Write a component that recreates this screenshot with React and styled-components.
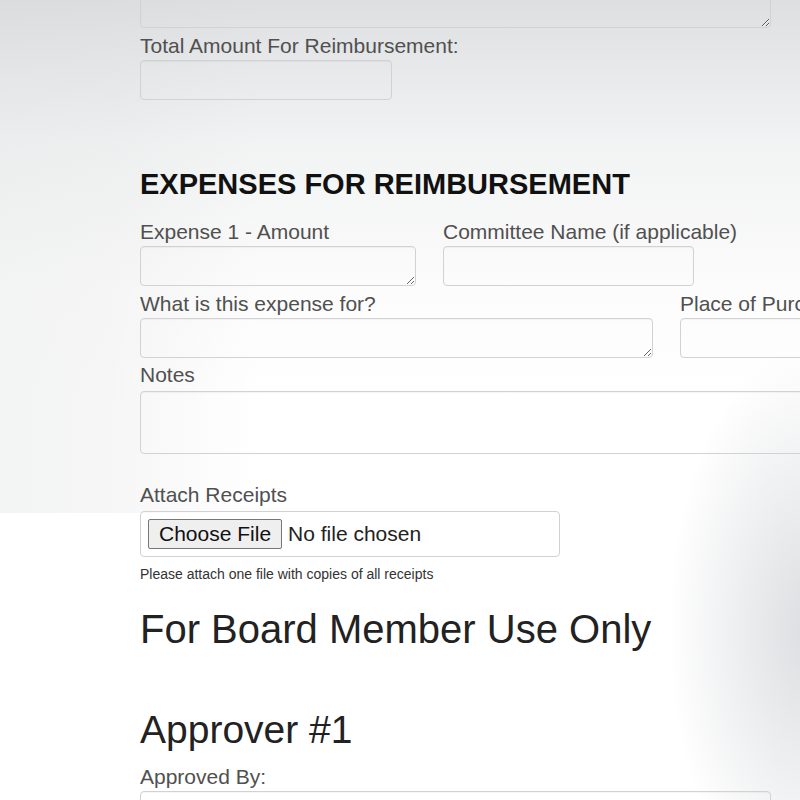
import styled, { createGlobalStyle } from "styled-components";

const GlobalStyle = createGlobalStyle`
  html, body {
    margin: 0;
    padding: 0;
    overflow: hidden;
    background: #fff;
  }
  body {
    font-family: "Liberation Sans", Arial, sans-serif;
  }
`;

const Page = styled.div`
  width: 800px;
  height: 800px;
  overflow: hidden;
  background:
    radial-gradient(ellipse 140px 280px at 101% 630px, rgba(205, 208, 212, 0.7), rgba(255, 255, 255, 0) 100%),
    linear-gradient(to bottom, rgba(212, 215, 217, 0.8) 0px, rgba(228, 230, 231, 0.5) 140px, rgba(242, 242, 242, 0.25) 290px, rgba(255, 255, 255, 0) 400px),
    linear-gradient(to right, #f3f4f4 0px, #f6f6f6 110px, rgba(255, 255, 255, 0) 260px) 0 0 / 100% 513px no-repeat,
    #fff;
`;

const Form = styled.form`
  display: flex;
  flex-direction: column;
  padding-left: 140px;
  width: 1100px;
`;

const Label = styled.label`
  display: block;
  font-size: 21px;
  line-height: 24px;
  color: #505050;
  margin-bottom: ${(p) => (p.$gap == null ? 2 : p.$gap)}px;
  white-space: nowrap;
`;

const Input = styled.input`
  display: block;
  box-sizing: border-box;
  width: ${(p) => p.$w}px;
  height: 40px;
  border: 1px solid #d2d2d2;
  border-radius: 4px;
  background: transparent;
  box-shadow: inset 0 1px 1px rgba(0, 0, 0, 0.04);
  font: inherit;
`;

const TextArea = styled.textarea`
  display: block;
  box-sizing: border-box;
  width: ${(p) => p.$w}px;
  height: ${(p) => p.$h || 40}px;
  border: 1px solid #d2d2d2;
  border-radius: 4px;
  background: transparent;
  box-shadow: inset 0 1px 1px rgba(0, 0, 0, 0.04);
  font: inherit;
  resize: both;
`;

const TopArea = styled(TextArea)`
  margin-top: -40px;
  margin-bottom: 6px;
`;

const Field = styled.div`
  display: flex;
  flex-direction: column;
  margin-top: ${(p) => p.$mt || 0}px;
`;

const Row = styled.div`
  display: flex;
  gap: 27px;
  margin-top: ${(p) => p.$mt || 0}px;
`;

const SectionTitle = styled.h3`
  margin: 68px 0 0;
  font-size: 29px;
  line-height: 32px;
  font-weight: 700;
  color: #111;
`;

const FileBox = styled.input`
  box-sizing: border-box;
  width: 420px;
  height: 46px;
  padding: 7px;
  border: 1px solid #d2d2d2;
  border-radius: 4px;
  background: transparent;
  font-family: "Liberation Sans", Arial, sans-serif;
  font-size: 21px;
  color: #222;

  &::file-selector-button {
    font: inherit;
    height: 30px;
    padding: 0 10px;
    margin-right: 6px;
    border: 1px solid #767676;
    border-radius: 2px;
    background: #efefef;
    color: #111;
  }
`;

const Help = styled.p`
  margin: 8px 0 0;
  font-size: 14px;
  line-height: 18px;
  color: #333;
`;

const BigTitle = styled.h2`
  margin: ${(p) => p.$mt}px 0 0;
  font-size: ${(p) => p.$size}px;
  line-height: ${(p) => p.$size + 4}px;
  font-weight: 400;
  color: #222;
`;

export default function App() {
  return (
    <Page>
      <GlobalStyle />
      <Form onSubmit={(e) => e.preventDefault()}>
        <TopArea $w={631} $h={68} />
        <Field>
          <Label>Total Amount For Reimbursement:</Label>
          <Input $w={252} type="text" />
        </Field>

        <SectionTitle>EXPENSES FOR REIMBURSEMENT</SectionTitle>

        <Row $mt={20}>
          <Field>
            <Label>Expense 1 - Amount</Label>
            <TextArea $w={276} />
          </Field>
          <Field>
            <Label>Committee Name (if applicable)</Label>
            <Input $w={251} type="text" />
          </Field>
        </Row>

        <Row $mt={6}>
          <Field>
            <Label>What is this expense for?</Label>
            <TextArea $w={513} />
          </Field>
          <Field>
            <Label>Place of Purchase</Label>
            <Input $w={251} type="text" />
          </Field>
        </Row>

        <Field $mt={5}>
          <Label $gap={4}>Notes</Label>
          <TextArea $w={760} $h={63} />
        </Field>

        <Field $mt={29}>
          <Label $gap={4}>Attach Receipts</Label>
          <FileBox type="file" name="file" />
          <Help>Please attach one file with copies of all receipts</Help>
        </Field>

        <BigTitle $size={40} $mt={24}>For Board Member Use Only</BigTitle>
        <BigTitle $size={39} $mt={57}>Approver #1</BigTitle>

        <Field $mt={14}>
          <Label>Approved By:</Label>
          <Input $w={631} type="text" />
        </Field>
      </Form>
    </Page>
  );
}
